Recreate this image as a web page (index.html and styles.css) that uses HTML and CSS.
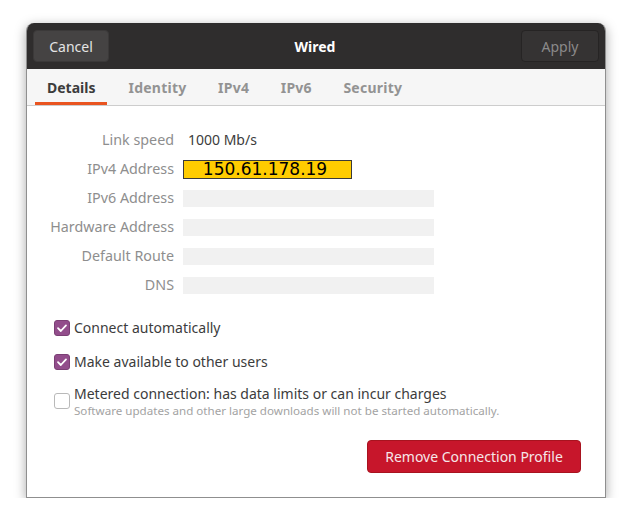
FILE: index.html
```html
<!DOCTYPE html>
<html>
<head>
<meta charset="utf-8">
<link rel="stylesheet" href="styles.css">
</head>
<body>
<div class="window">
  <div class="header">
    <button class="btn cancel">Cancel</button>
    <div class="title">Wired</div>
    <button class="btn apply">Apply</button>
  </div>
  <div class="tabs">
    <div class="tab active">Details</div>
    <div class="tab">Identity</div>
    <div class="tab">IPv4</div>
    <div class="tab">IPv6</div>
    <div class="tab">Security</div>
  </div>
  <div class="content">
    <div class="grid">
      <div class="label">Link speed</div><div class="value speed">1000 Mb/s</div>
      <div class="label">IPv4 Address</div><div class="value"><span class="ip">150.61.178.19</span></div>
      <div class="label">IPv6 Address</div><div class="value"><span class="bar"></span></div>
      <div class="label">Hardware Address</div><div class="value"><span class="bar"></span></div>
      <div class="label">Default Route</div><div class="value"><span class="bar"></span></div>
      <div class="label">DNS</div><div class="value"><span class="bar"></span></div>
    </div>
    <div class="checks">
      <div class="check"><span class="box on"><svg viewBox="0 0 16 16" width="16" height="16"><path d="M4 8.2 L6.8 11 L12 5.4" fill="none" stroke="#fff" stroke-width="1.8" stroke-linecap="round" stroke-linejoin="round"/></svg></span><span class="ctext">Connect automatically</span></div>
      <div class="check"><span class="box on"><svg viewBox="0 0 16 16" width="16" height="16"><path d="M4 8.2 L6.8 11 L12 5.4" fill="none" stroke="#fff" stroke-width="1.8" stroke-linecap="round" stroke-linejoin="round"/></svg></span><span class="ctext">Make available to other users</span></div>
      <div class="check metered"><span class="box"></span><div class="mtext"><div class="ctext">Metered connection: has data limits or can incur charges</div><div class="sub">Software updates and other large downloads will not be started automatically.</div></div></div>
    </div>
    <div class="actions">
      <button class="remove">Remove Connection Profile</button>
    </div>
  </div>
</div>
</body>
</html>
```
FILE: styles.css
```css
html, body { margin: 0; padding: 0; background: #ffffff; }
body {
  font-family: "Noto Sans", "DejaVu Sans", sans-serif;
  padding: 23px 0 0 26px;
}
.window {
  width: 580px;
  height: 475px;
  box-sizing: border-box;
  border: 1px solid #8f8f8f;
  border-top: none;
  border-radius: 8px 8px 0 0;
  box-shadow: 0 3px 12px rgba(0,0,0,0.35);
  background: #fff;
  display: flex;
  flex-direction: column;
  overflow: hidden;
}
.header {
  height: 46px;
  background: #2f2d2d;
  display: flex;
  align-items: center;
  justify-content: space-between;
  padding: 0 6px 0 6px;
  flex-shrink: 0;
}
.btn {
  font-family: inherit;
  font-size: 14px;
  height: 32px;
  border-radius: 4px;
  padding: 0;
}
.cancel {
  width: 76px;
  background: #454343;
  border: 1px solid #3b3939;
  color: #e4e4e4;
}
.apply {
  width: 78px;
  background: #353333;
  border: 1px solid #262424;
  color: #8b8a8a;
}
.title {
  color: #ffffff;
  font-weight: bold;
  font-size: 14px;
}
.tabs {
  height: 37px;
  background: #f6f6f6;
  border-bottom: 1px solid #cdcdcd;
  display: flex;
  padding-left: 8px;
  flex-shrink: 0;
  box-sizing: border-box;
}
.tab {
  font-size: 14px;
  font-weight: bold;
  color: #939393;
  padding: 0 15.75px;
  display: flex;
  align-items: center;
  border-bottom: 3px solid transparent;
  padding-top: 3px;
  letter-spacing: 0.25px;
}
.tab.active {
  color: #3c3c3c;
  border-bottom-color: #e95420;
  padding: 3px 12px 0 12px;
  letter-spacing: 0;
}
.tab.active + .tab { padding-left: 21px; }
.content {
  flex: 1;
  padding: 25px 0 0 0;
  display: flex;
  flex-direction: column;
}
.grid {
  display: grid;
  grid-template-columns: 147px 251px;
  column-gap: 9px;
  row-gap: 11px;
  align-items: center;
}
.label {
  text-align: right;
  color: #8e8e8e;
  font-size: 14.3px;
  line-height: 18px;
  white-space: nowrap;
}
.value {
  color: #3c3c3c;
  font-size: 14px;
  line-height: 18px;
  height: 18px;
  display: flex;
  align-items: center;
}
.value.speed { padding-left: 5px; }
.ip {
  display: block;
  box-sizing: border-box;
  width: 169px;
  height: 19px;
  background: #ffcc00;
  border: 1px solid #3a3a3a;
  color: #000;
  font-family: "DejaVu Sans", sans-serif;
  font-size: 17px;
  line-height: 17px;
  text-align: center;
  padding-right: 5px;
}
.bar {
  display: block;
  width: 251px;
  height: 17px;
  background: #f1f1f1;
}
.checks {
  padding: 24px 0 0 27px;
  display: flex;
  flex-direction: column;
  gap: 14px;
}
.check {
  display: flex;
  align-items: center;
  gap: 4px;
  color: #3c3c3c;
  font-size: 14px;
}
.check.metered { margin-top: -2px; }
.box {
  width: 16px;
  height: 16px;
  box-sizing: border-box;
  border-radius: 3px;
  border: 1px solid #b9b9b9;
  background: #fff;
  flex-shrink: 0;
  display: block;
}
.box.on {
  background: #924d8b;
  border-color: #7b3f75;
}
.box svg { display: block; margin: -1px; }
.ctext { line-height: 20px; }
.sub {
  font-size: 11.6px;
  color: #a3a3a3;
  line-height: 13px;
}
.actions {
  display: flex;
  justify-content: flex-end;
  padding: 23px 24px 0 0;
}
.remove {
  font-family: inherit;
  font-size: 14px;
  width: 214px;
  height: 33px;
  background: #c7162b;
  color: #f6e6e8;
  border: 1px solid #a8131f;
  border-radius: 4px;
  padding: 0;
}
```
